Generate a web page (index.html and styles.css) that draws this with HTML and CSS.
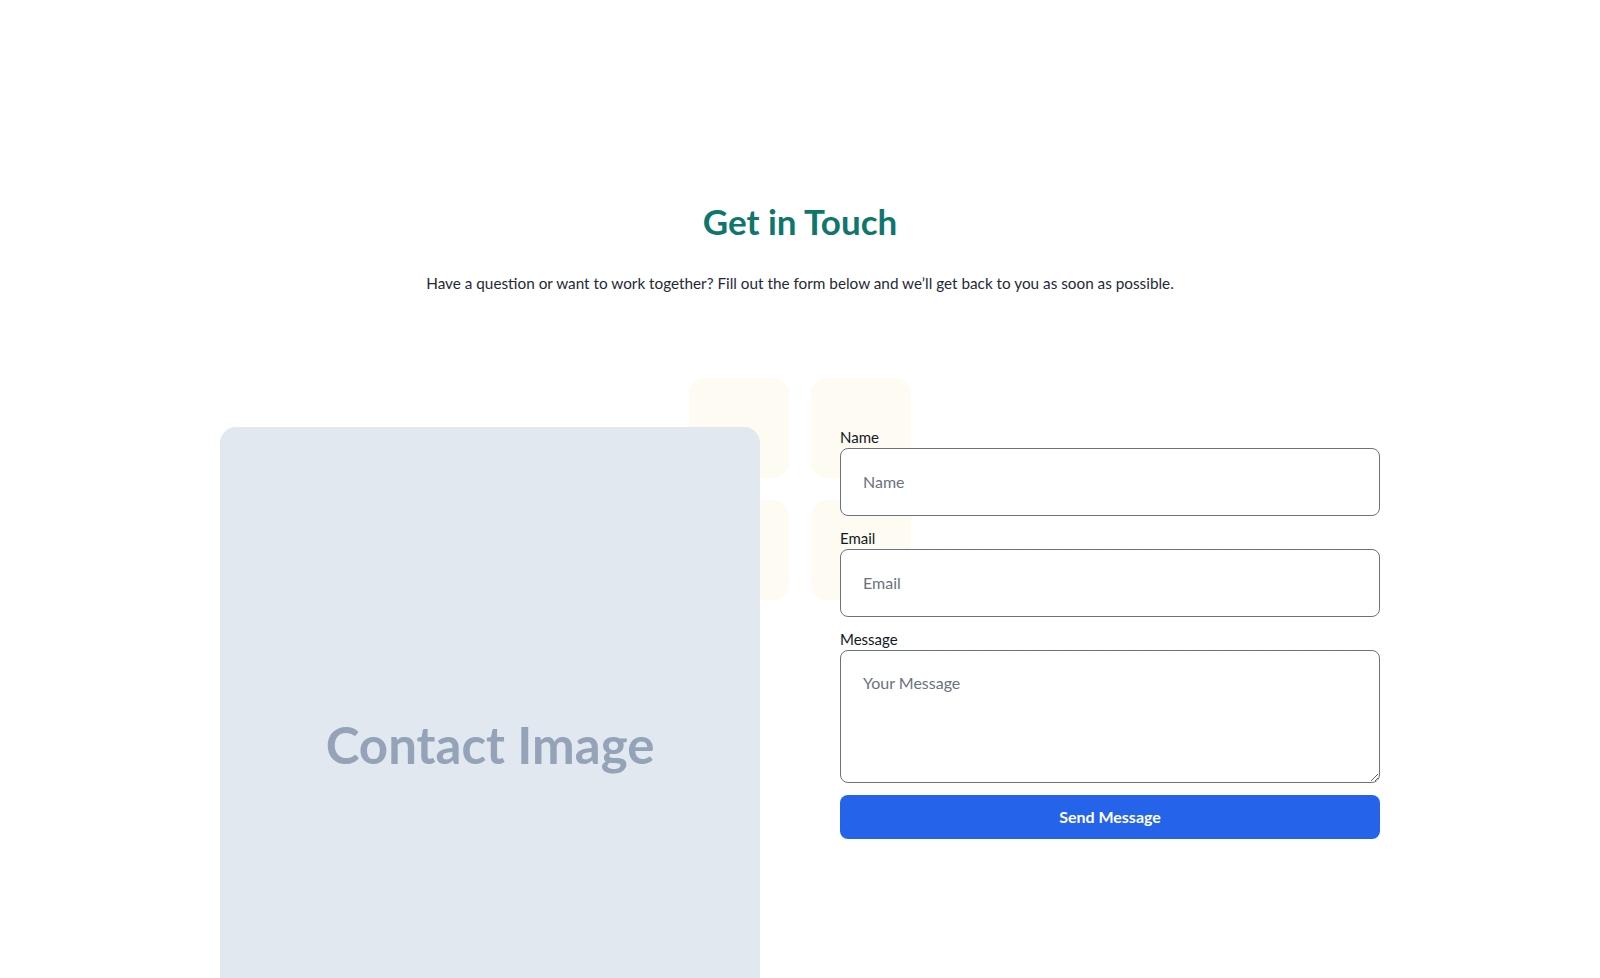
FILE: index.html
```html
<!DOCTYPE html>
<html lang="en">
<head>
  <meta charset="UTF-8" />
  <meta name="viewport" content="width=device-width, initial-scale=1.0"/>
  <title>Contact - Get in Touch</title>
  <link rel="stylesheet" href="styles.css">
</head>
<body>
  <section class="contact">
    <h1 class="contact-title">Get in Touch</h1>
    <p class="contact-lead">Have a question or want to work together? Fill out the form below and we’ll get back to you as soon as possible.</p>

    <div class="contact-body">
      <div class="deco">
        <span></span><span></span><span></span><span></span>
      </div>

      <div class="contact-image">
        <span>Contact Image</span>
      </div>

      <form class="contact-form" onsubmit="return false">
        <label for="nome">Name</label>
        <input type="text" id="nome" name="name" placeholder="Name" />

        <label for="email">Email</label>
        <input type="email" id="email" name="email" placeholder="Email" />

        <label for="mensagem">Message</label>
        <textarea id="mensagem" name="message" placeholder="Your Message"></textarea>

        <button type="submit">Send Message</button>
      </form>
    </div>
  </section>
</body>
</html>
```

FILE: styles.css
```css
:root {
  --cor-titulo: #0f766e;
  --cor-texto: #1f2937;
  --cor-borda: #6b7280;
  --cor-botao: #2563eb;
  --cor-card: #e2e8f0;
  --cor-card-texto: #94a3b8;
  --cor-deco: #fefcf2;
}

body {
  margin: 0;
  font-family: 'Lato', 'Noto Sans', sans-serif;
  background-color: #ffffff;
  color: var(--cor-texto);
}

.contact {
  padding-top: 201px;
}

.contact-title {
  margin: 0;
  text-align: center;
  font-size: 35px;
  line-height: 40px;
  font-weight: 700;
  color: var(--cor-titulo);
}

.contact-lead {
  margin: 30px 0 0;
  text-align: center;
  font-size: 15.3px;
  line-height: 24px;
}

.contact-body {
  position: relative;
  display: grid;
  grid-template-columns: 540px 540px;
  justify-content: center;
  gap: 80px;
  margin-top: 132px;
}

/* quadrados decorativos atras do card */
.deco {
  position: absolute;
  top: -49px;
  left: 50%;
  transform: translateX(-50%);
  display: grid;
  grid-template-columns: 100px 100px;
  gap: 22px;
}

.deco span {
  width: 100px;
  height: 100px;
  border-radius: 16px;
  background-color: var(--cor-deco);
}

.contact-image {
  position: relative;
  height: 634px;
  display: flex;
  align-items: center;
  justify-content: center;
  background-color: var(--cor-card);
  border-radius: 16px;
}

.contact-image span {
  font-family: 'Lato', sans-serif;
  font-size: 51px;
  font-weight: 700;
  color: var(--cor-card-texto);
}

.contact-form {
  position: relative;
  display: flex;
  flex-direction: column;
}

label {
  display: block;
  font-size: 15px;
  line-height: 20px;
  color: #111827;
  margin-bottom: 1px;
}

input, textarea {
  width: 100%;
  box-sizing: border-box;
  padding: 21px 22px;
  font-family: inherit;
  font-size: 16px;
  line-height: 24px;
  color: var(--cor-texto);
  background-color: #ffffff;
  border: 1px solid var(--cor-borda);
  border-radius: 8px;
  margin-bottom: 12px;
}

input::placeholder, textarea::placeholder {
  color: #6b7280;
}

textarea {
  height: 133px;
  padding-top: 20px;
  resize: vertical;
}

button {
  width: 100%;
  padding: 10px;
  font-family: inherit;
  font-size: 16px;
  line-height: 24px;
  font-weight: 700;
  color: #ffffff;
  background-color: var(--cor-botao);
  border: none;
  border-radius: 8px;
  cursor: pointer;
}

button:hover {
  background-color: #1d4ed8;
}
```
